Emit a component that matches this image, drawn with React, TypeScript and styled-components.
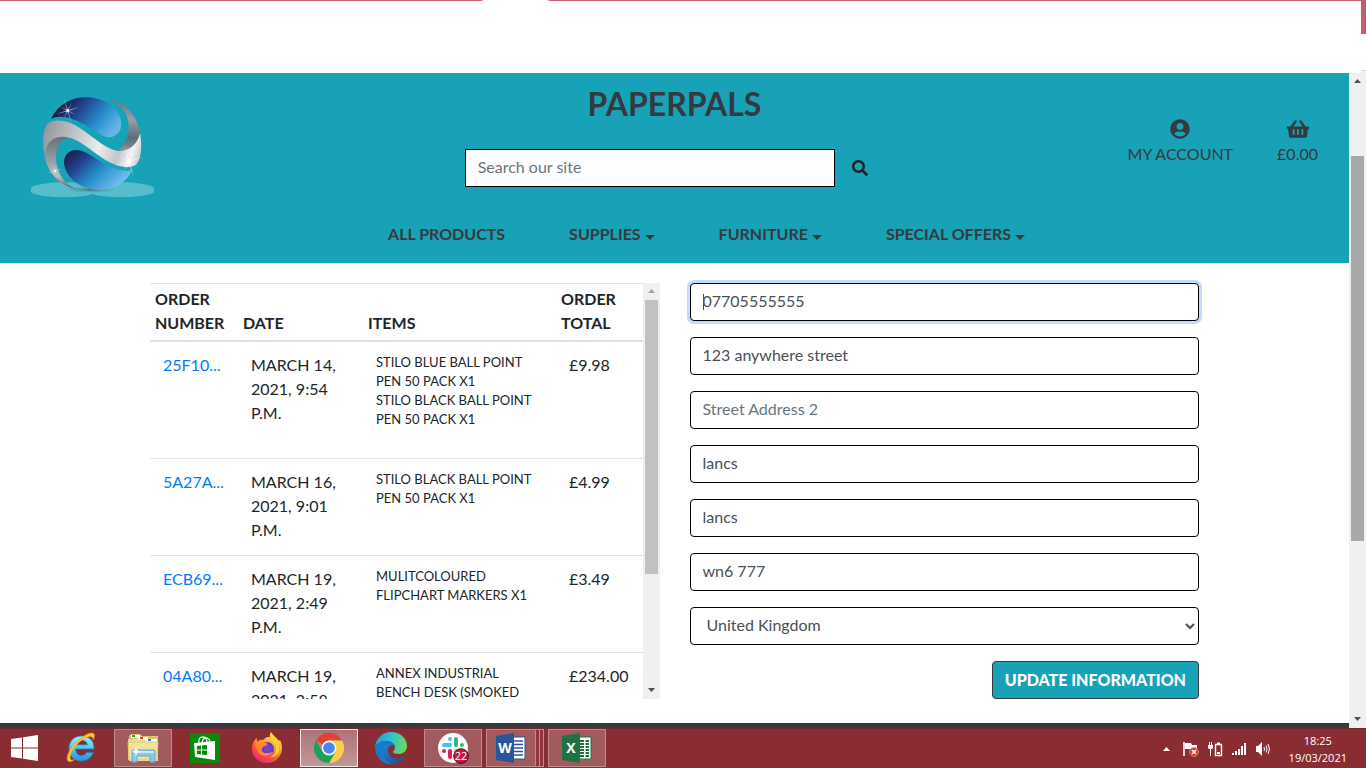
import React from "react";
import styled, { createGlobalStyle, css } from "styled-components";
import { FaSearch, FaShoppingBasket, FaUserCircle } from "react-icons/fa";

const GlobalStyle = createGlobalStyle`
  *, *::before, *::after { box-sizing: border-box; }
  body {
    margin: 0;
    font-family: Lato, "Liberation Sans", sans-serif;
    font-size: 16px;
    line-height: 24px;
    color: #212529;
    background: #fff;
  }
  input, select, button { font: inherit; margin: 0; }
  a { text-decoration: none; }
`;

const Screen = styled.div`
  display: flex;
  flex-direction: column;
  min-height: 100vh;
`;

/* ---------- browser frame ---------- */

const WindowTop = styled.div`
  display: flex;
  height: 73px;
`;

const TabEdge = styled.div`
  flex: 1;
  height: 1px;
  background: linear-gradient(90deg, #c95f6b 481px, #fff 484px 547px, #c95f6b 550px);
`;

const WindowEdge = styled.div`
  width: 5px;
  background: linear-gradient(#c95c68 34px, #fff 34px 70px, #dadada 70px 71px, #f0f0f0 71px);
`;

const Viewport = styled.div`
  display: flex;
  flex: 1;
`;

const Page = styled.div`
  display: flex;
  flex-direction: column;
  flex: 1;
  min-width: 0;
`;

const Track = styled.div`
  display: flex;
  flex-direction: column;
  align-items: center;
  flex: none;
  width: 17px;
  background: #f0f0f0;
`;

const TrackSpace = styled.div<{ $part: number }>`
  flex: ${(p) => p.$part} 1 0;
`;

const Thumb = styled.div<{ $part: number; $color: string }>`
  flex: ${(p) => p.$part} 1 0;
  width: 13px;
  background: ${(p) => p.$color};
`;

const ArrowCell = styled.div<{ $color: string }>`
  display: flex;
  align-items: center;
  justify-content: center;
  height: 17px;
  padding-bottom: 2px;
  color: ${(p) => p.$color};
`;

interface ScrollbarProps {
  before: number;
  thumb: number;
  after: number;
  color: string;
  upColor: string;
}

function Scrollbar({ before, thumb, after, color, upColor }: ScrollbarProps) {
  return (
    <Track aria-hidden="true">
      <ArrowCell $color={upColor}>
        <svg width="7" height="4" viewBox="0 0 7 4"><path d="M0 4L3.5 0L7 4Z" fill="currentColor" /></svg>
      </ArrowCell>
      <TrackSpace $part={before} />
      <Thumb $part={thumb} $color={color} />
      <TrackSpace $part={after} />
      <ArrowCell $color="#505050">
        <svg width="7" height="4" viewBox="0 0 7 4"><path d="M0 0L3.5 4L7 0Z" fill="currentColor" /></svg>
      </ArrowCell>
    </Track>
  );
}

/* ---------- shop header ---------- */

const Header = styled.header`
  background: #17a2b8;
  color: #343a40;
  padding-bottom: 9px;
`;

const HeaderTop = styled.div`
  display: grid;
  grid-template-columns: repeat(3, 1fr);
  height: 141px;
`;

const LogoLink = styled.a`
  display: block;
  padding: 24px 0 0 31px;
  svg { display: block; }
`;

const Middle = styled.div`
  padding: 12px 15px 0;
`;

const Title = styled.h1`
  margin: 0 0 26px;
  font-size: 32px;
  line-height: 38px;
  font-weight: 700;
  text-align: center;
`;

const SearchForm = styled.form`
  display: flex;
`;

const SearchInput = styled.input`
  flex: 1;
  min-width: 0;
  height: 38px;
  padding: 0 12px 3px;
  border: 1px solid #000;
  border-radius: 0;
  background: #fff;
  color: #495057;
  &::placeholder { color: #6c757d; opacity: 1; }
`;

const SearchButton = styled.button`
  display: flex;
  align-items: center;
  justify-content: center;
  width: 49px;
  height: 38px;
  padding: 0;
  border: 0;
  background: transparent;
  color: #212529;
`;

const UserLinks = styled.ul`
  display: flex;
  justify-content: flex-end;
  gap: 44px;
  margin: 0;
  padding: 46px 31px 0 0;
  list-style: none;
`;

const UserLink = styled.a<{ $iconWidth: number }>`
  display: flex;
  flex-direction: column;
  align-items: center;
  gap: 3px;
  color: #343a40;
  svg { display: block; height: 20px; width: ${(p) => p.$iconWidth}px; }
`;

const Nav = styled.nav`
  display: flex;
  justify-content: center;
  gap: 64px;
  padding: 8px 0 8px 64px;
`;

const NavLink = styled.a<{ $menu?: boolean }>`
  display: flex;
  align-items: center;
  color: #343a40;
  font-weight: 700;
  white-space: nowrap;
  ${(p) => p.$menu && css`
    &::after {
      content: "";
      margin: 6px 0 0 4px;
      border: 5px solid transparent;
      border-top-color: currentColor;
      border-bottom: 0;
    }
  `}
`;

/* ---------- profile ---------- */

const Main = styled.main`
  display: grid;
  grid-template-columns: repeat(2, minmax(0, 1fr));
  gap: 30px;
  width: 100%;
  max-width: 1049px;
  margin: 0 auto;
  padding: 20px 0 24px;
`;

const History = styled.section`
  display: flex;
  height: 416px;
`;

const HistoryScroll = styled.div`
  flex: 1;
  min-width: 0;
  overflow: hidden;
`;

const Orders = styled.table`
  width: 100%;
  table-layout: fixed;
  border-spacing: 0;
  text-transform: uppercase;
  tbody tr:first-child td { border-top: 0; }
`;

const Col = styled.col<{ $w: string }>`
  width: ${(p) => p.$w};
`;

const HeadCell = styled.th`
  padding: 3px 5px 5px;
  border-top: 1px solid #dee2e6;
  border-bottom: 2px solid #dee2e6;
  text-align: left;
  vertical-align: bottom;
  font-weight: 700;
`;

const Cell = styled.td`
  padding: 11px 13px 13px;
  border-top: 1px solid #dee2e6;
  vertical-align: top;
`;

const OrderLink = styled.a`
  color: #007bff;
`;

const ItemList = styled.ul`
  margin: 0 0 16px;
  padding: 0;
  list-style: none;
  font-size: 13px;
  line-height: 19px;
`;

const Details = styled.form`
  display: flex;
  flex-direction: column;
  gap: 16px;
`;

const Field = styled.div`
  position: relative;
  display: flex;
`;

const control = css`
  width: 100%;
  height: 38px;
  border: 1px solid #000;
  border-radius: 4px;
  background: #fff;
  color: #495057;
`;

const TextInput = styled.input<{ $active?: boolean }>`
  ${control}
  padding: 0 12px 3px;
  box-shadow: ${(p) => (p.$active ? "0 0 0 3px #bfdeff" : "none")};
  &::placeholder { color: #6c757d; opacity: 1; }
`;

const TextCaret = styled.span`
  position: absolute;
  left: 13px;
  top: 11px;
  width: 1px;
  height: 16px;
  background: #495057;
`;

const Select = styled.select`
  ${control}
  padding: 0 12px 3px;
`;

const UpdateButton = styled.button`
  align-self: flex-end;
  height: 38px;
  padding: 0 12px 1px;
  border: 1px solid #343a40;
  border-radius: 4px;
  background: #17a2b8;
  color: #fff;
  font-weight: 900;
  text-transform: uppercase;
`;

const Footer = styled.footer`
  height: 5px;
  margin-top: auto;
  background: #343a40;
`;

/* ---------- taskbar ---------- */

const Taskbar = styled.div`
  display: flex;
  align-items: stretch;
  height: 40px;
  border-top: 1px solid #74262c;
  background: #892d33;
  color: #fff;
`;

const Apps = styled.div`
  display: flex;
  gap: 4px;
  padding-bottom: 1px;
`;

const AppButton = styled.button<{ $state?: "open" | "active"; $w?: number }>`
  display: flex;
  align-items: center;
  justify-content: center;
  width: ${(p) => p.$w ?? 58}px;
  padding: 0;
  border: 1px solid ${(p) => (p.$state === "active" ? "#f4e9ea" : p.$state ? "#c08b8e" : "transparent")};
  background: ${(p) => (p.$state === "active" ? "linear-gradient(#ab7477, #c19799)" : p.$state ? "#a15a5e" : "transparent")};
  svg { display: block; }
`;

const AppStack = styled.div`
  display: flex;
  width: 58px;
`;

const StackEdge = styled.span`
  width: 4px;
  border: 1px solid #c08b8e;
  border-left: 0;
  background: #8f373c;
`;

const Tray = styled.div`
  display: flex;
  align-items: center;
  gap: 8px;
  margin-left: auto;
  padding-right: 19px;
  svg { display: block; }
  svg:first-child { margin-right: 5px; }
`;

const Clock = styled.time`
  margin-left: 10px;
  font-family: "Open Sans", "Noto Sans", sans-serif;
  font-size: 11px;
  line-height: 17px;
  text-align: center;
`;

/* ---------- drawings ---------- */

function Sparkle({ x, y, r }: { x: number; y: number; r: number }) {
  return (
    <g transform={`translate(${x} ${y}) rotate(-17) scale(${r})`} fill="#fff">
      <path d="M0 -1L.05 -.05L0 1L-.05 -.05Z" opacity=".55" />
      <path d="M-1 0L0 -.05L1 0L0 .05Z" opacity=".55" />
      <path d="M-.5 -.5L.04 -.04L.5 .5L-.04 .04ZM.5 -.5L.04 .04L-.5 .5L-.04 -.04Z" opacity=".4" />
      <circle r=".11" />
    </g>
  );
}

function Logo() {
  return (
    <svg width="123" height="100" viewBox="93 81 369 300" role="img" aria-label="Paperpals home">
      <defs>
        <linearGradient id="blueTop" gradientUnits="userSpaceOnUse" x1="195" y1="95" x2="325" y2="205">
          <stop offset="0" stopColor="#152047" /><stop offset=".27" stopColor="#21418d" />
          <stop offset=".65" stopColor="#258dcb" /><stop offset="1" stopColor="#63b7e8" />
        </linearGradient>
        <linearGradient id="blueLow" gradientUnits="userSpaceOnUse" x1="202" y1="242" x2="325" y2="370">
          <stop offset="0" stopColor="#141c3c" /><stop offset=".3" stopColor="#21418d" />
          <stop offset=".62" stopColor="#258dcb" /><stop offset="1" stopColor="#6dbceb" />
        </linearGradient>
        <linearGradient id="silver" gradientUnits="userSpaceOnUse" x1="130" y1="180" x2="420" y2="270">
          <stop offset="0" stopColor="#92979c" /><stop offset=".25" stopColor="#b7babe" />
          <stop offset=".57" stopColor="#ececef" /><stop offset=".78" stopColor="#c3c6c9" />
          <stop offset=".9" stopColor="#f4f4f5" /><stop offset="1" stopColor="#c4c7ca" />
        </linearGradient>
        <linearGradient id="steelR" x1="0" y1="0" x2="0" y2="1">
          <stop offset="0" stopColor="#65727b" /><stop offset=".4" stopColor="#98a0a5" />
          <stop offset=".75" stopColor="#5d6c76" /><stop offset="1" stopColor="#8a9296" />
        </linearGradient>
        <linearGradient id="steelL" x1="0" y1="0" x2="0" y2="1">
          <stop offset="0" stopColor="#64727b" /><stop offset=".45" stopColor="#969da2" />
          <stop offset=".75" stopColor="#b9bcbf" /><stop offset="1" stopColor="#505f69" />
        </linearGradient>
        <radialGradient id="shade">
          <stop offset="0" stopColor="#4a5d68" stopOpacity=".9" /><stop offset="1" stopColor="#5fa0ab" stopOpacity="0" />
        </radialGradient>
      </defs>
      <path d="M93 353C115 334 245 331 278 348C312 331 440 334 462 353V367C440 385 312 386 278 372C245 386 115 385 93 367Z" fill="#fff" opacity=".28" />
      <ellipse cx="275" cy="359" rx="82" ry="10" fill="url(#shade)" />
      <path d="M133 252C137 208 170 192 207 203C180 208 166 235 168 270C172 312 194 344 230 358C178 348 139 304 133 252Z" fill="url(#steelL)" />
      <path d="M325 86C378 97 413 140 421 190C414 226 388 247 355 241C379 220 390 190 385 155C380 125 360 100 325 86Z" fill="url(#steelR)" />
      <path d="M153 147C175 100 220 80 262 82C325 84 363 125 364 160C364 185 350 201 328 202C300 202 275 170 225 150C195 138 170 138 153 147Z" fill="url(#blueTop)" />
      <path d="M397 300C375 345 335 360 295 360C235 358 192 315 192 275C194 252 210 240 228 240C260 240 280 265 320 285C350 300 375 305 397 300Z" fill="url(#blueLow)" />
      <path d="M134 254C125 210 131 172 145 158C165 148 195 150 225 165C270 190 310 235 350 242C385 247 412 225 420 190C426 220 425 260 412 280C400 294 375 294 350 286C300 270 265 225 215 205C180 194 141 200 134 254Z" fill="url(#silver)" />
      <Sparkle x={203} y={122} r={38} />
      <Sparkle x={387} y={274} r={48} />
      <Sparkle x={165} y={303} r={24} />
    </svg>
  );
}

const StartIcon = () => (
  <svg width="28" height="26" viewBox="0 0 28 26" fill="#fff"><path d="M1 4L12 2.4V12.4H1ZM13 2.2L28 0V12.4H13ZM1 13.4H12V23.6L1 22ZM13 13.4H28V26L13 23.8Z" /></svg>
);

const ExplorerEIcon = () => (
  <svg width="32" height="32" viewBox="1 1 32 32">
    <defs><linearGradient id="ieBlue" x1="0" y1="0" x2="0" y2="1"><stop offset="0" stopColor="#a6e9fd" /><stop offset=".5" stopColor="#50c5f3" /><stop offset="1" stopColor="#2397dc" /></linearGradient></defs>
    <path d="M30 18H11.5C11.8 22 14 24.5 17.5 24.5C20 24.5 21.6 23.4 22.6 21.6H29.2C27.4 27 23 30 17.3 30C9.8 30 5 25 5 17.6C5 10 10 5 17.3 5C25.5 5 30.5 10 30 18ZM11.7 13.8H23.4C23 11 20.7 9.3 17.7 9.3C14.5 9.3 12.2 11 11.7 13.8Z" fill="url(#ieBlue)" stroke="#1b83bd" strokeWidth=".7" />
    <path d="M4 30C1 27 6 16 15 8.5C21 3.5 28 0 30 3C31 4.5 30.3 7 29.3 9C29 6.5 27.5 4.5 23 6.3C13 10.3 4.5 23 6.5 28C7.3 29.6 9.5 29 11 28.3C8 30.8 5.5 31.2 4 30Z" fill="#fbc62b" stroke="#d99b12" strokeWidth=".5" />
  </svg>
);

const FolderIcon = () => (
  <svg width="34" height="30" viewBox="0 0 34 30">
    <path d="M3 3L5 1H14L16 3H32V26H3Z" fill="#d8c375" />
    <path d="M5 2H14V5H5Z" fill="#fff" /><path d="M6 2H9V4H6Z" fill="#1aab38" />
    <path d="M2 6H31V27H2Z" fill="#ead88b" /><path d="M12 4H22V7H12Z" fill="#fff" /><path d="M14 4H17V6H14Z" fill="#dc3b2d" />
    <path d="M3 8H32V28H3Z" fill="#f5e7a4" /><path d="M20 6H31V9H20Z" fill="#fff" /><path d="M22 6H25V8H22Z" fill="#2a83dc" />
    <path d="M2 9H32L31 27H3Z" fill="#f3e19a" stroke="#dcc777" />
    <path d="M6 18Q6 17 7 17H28Q29 17 29 18V29H24V23H11V29H6Z" fill="#8ac8e6" stroke="#5fa9cf" />
    <path d="M7 18H28V20H7Z" fill="#c6eafa" />
    <path d="M10 13L11 17L14 18.500L11 20L10 24L9 20L6 18.500L9 17Z" fill="#fff" />
  </svg>
);

const StoreIcon = () => (
  <svg width="30" height="30" viewBox="0 0 30 30">
    <path d="M0 0H30V30H0Z" fill="#078a08" />
    <path d="M9 10Q8 4 13 4Q17 4 17 10M12 10Q13 4 17 5Q20 6 20 10" fill="none" stroke="#e8f3e8" strokeWidth="1.300" />
    <path d="M4 10L25 8V27L5 24Z" fill="#fff" />
    <path d="M7 13L11 12.600V16.500H7ZM12 12.500L17 12V16.500H12ZM7 17.500H11V21.500L7 21ZM12 17.500H17V22.200L12 21.600Z" fill="#078a08" />
  </svg>
);

const FirefoxIcon = () => (
  <svg width="32" height="32" viewBox="0 0 32 32">
    <defs>
      <linearGradient id="foxFire" x1=".8" y1="0" x2=".25" y2="1"><stop offset="0" stopColor="#fff04a" /><stop offset=".35" stopColor="#ffb02c" /><stop offset=".65" stopColor="#ff5a38" /><stop offset="1" stopColor="#e5207c" /></linearGradient>
      <radialGradient id="foxGlobe"><stop offset="0" stopColor="#7b45d4" /><stop offset="1" stopColor="#5a3cb6" /></radialGradient>
    </defs>
    <path d="M16 31C7 31 1 24.500 1 16.500C1 12 3 8.500 5.500 6L6.500 10C8 8 9 7.500 12 8C14 6 15 4.500 19 5C18.500 3.500 19 2 20 0C22 4 26 5.500 28 9L29 8C31 12 31 15 31 17C30.500 25 24 31 16 31Z" fill="url(#foxFire)" />
    <circle cx="16" cy="17" r="7" fill="url(#foxGlobe)" />
    <path d="M5 10C9 8 14 10 17 12C15 14 13 14 11 16C10 19 12 21 15 21C18 22 19 20 22 20C19 25 12 25 8 21C5 18 4 14 5 10Z" fill="#ff8a28" />
    <path d="M18 7C23 8 26 13 25 19C24 23 21 25 18 25C25 26 29 21 28 15C27 11 23 7 18 7Z" fill="#ffd23d" />
  </svg>
);

const ChromeIcon = () => (
  <svg width="30" height="30" viewBox="0 0 30 30">
    <path d="M15 15L2 7.500A15 15 0 0 1 28 7.500H15Z" fill="#dc4535" />
    <path d="M15 15V7.500H28A15 15 0 0 1 15 30L21.500 18.800Z" fill="#fdce44" />
    <path d="M15 15L21.500 18.800L15 30A15 15 0 0 1 2 7.500L8.500 18.800Z" fill="#1ea05c" />
    <circle cx="15" cy="15" r="7.400" fill="#f5f5f5" /><circle cx="15" cy="15" r="5.800" fill="#4486f4" />
  </svg>
);

const EdgeIcon = () => (
  <svg width="32" height="32" viewBox="0 0 32 32">
    <defs>
      <linearGradient id="edgeTop" x1="0" y1=".3" x2="1" y2=".5"><stop offset="0" stopColor="#239be2" /><stop offset=".5" stopColor="#2fc2cf" /><stop offset="1" stopColor="#68dc55" /></linearGradient>
      <linearGradient id="edgeLow" x1="0" y1="0" x2="1" y2="1"><stop offset="0" stopColor="#2287da" /><stop offset="1" stopColor="#104d8e" /></linearGradient>
    </defs>
    <path d="M0 15C1 6 8 0 16 0C26 0 32 7 32 14C32 19 28 22 24 22C20 22 18 21 18 20C18 19 20 18 20 15C20 12 16 9 11 9C6 9 2 12 0 15Z" fill="url(#edgeTop)" />
    <path d="M0 15C2 11 6 9 11 9C16 9 20 12 20 15C18 12 14 13 13 16C11 21 16 27 22 27C26 27 28 25 30 24C27 29 22 32 16 32C7 32 0 25 0 15Z" fill="#1b78cb" />
    <path d="M13 12C9 14 8 17 8 20C8 26 12 31 18 32C23 31.500 27 29 30 24C27 26 25 27 22 27C16 27 11 21 13 16C13.500 14 15 13 16 13C15 12 14 12 13 12Z" fill="url(#edgeLow)" />
  </svg>
);

const SlackIcon = () => (
  <svg width="32" height="32" viewBox="0 0 32 32">
    <circle cx="16" cy="16" r="15" fill="#fff" />
    <g strokeWidth="4" strokeLinecap="round">
      <path d="M13 7V7.100M7 13H13" stroke="#36c5f0" /><path d="M19 7V13M25 13V13.100" stroke="#2eb67d" />
      <path d="M25 19H19M19 25V25.100" stroke="#ecb22e" /><path d="M13 19V25M7 19V19.100" stroke="#e01e5a" />
    </g>
    <circle cx="24" cy="24" r="7.300" fill="#c9174c" stroke="#3d0f1e" />
    <text x="24" y="28" fill="#fff" fontSize="11" fontFamily="Open Sans, sans-serif" textAnchor="middle">22</text>
  </svg>
);

interface OfficeIconProps {
  letter: string;
  color: string;
  grid?: boolean;
}

const OfficeIcon = ({ letter, color, grid }: OfficeIconProps) => (
  <svg width="30" height="30" viewBox="0 0 30 30">
    <path d="M16 4H29V26H16Z" fill="#fff" stroke={color} />
    {grid
      ? <path d="M18 8H22M23.500 8H27M18 11H22M23.500 11H27M18 14H22M23.500 14H27M18 17H22M23.500 17H27M18 20H22M23.500 20H27M18 23H22M23.500 23H27" stroke={color} strokeWidth="2" />
      : <path d="M18 8H27M18 11.500H27M18 15H27M18 18.500H27M18 22H27" stroke={color} strokeWidth="1.300" />}
    <path d="M0 3L18 0V30L0 27Z" fill={color} />
    <text x="9" y="20" fill="#fff" fontSize="14" fontWeight="700" fontFamily="Open Sans, sans-serif" textAnchor="middle">{letter}</text>
  </svg>
);

const TrayArrow = () => (
  <svg width="7" height="4" viewBox="0 0 7 4"><path d="M0 4L3.500 0L7 4Z" fill="#fff" /></svg>
);

const FlagIcon = () => (
  <svg width="16" height="16" viewBox="0 0 16 16">
    <path d="M1 1V15" stroke="#fff" strokeWidth="1.600" /><path d="M2 2H8L9 4H14V10H8L7 8H2Z" fill="#fff" />
    <circle cx="11" cy="11" r="4.500" fill="#dc3626" stroke="#f4a39b" strokeWidth=".6" />
    <path d="M9 9L13 13M13 9L9 13" stroke="#fff" strokeWidth="1.600" />
  </svg>
);

const BatteryIcon = () => (
  <svg width="16" height="16" viewBox="0 0 16 16">
    <path d="M1 4H6V7L5 8H2L1 7ZM2 1H3V4H2ZM4 1H5V4H4ZM3 8H4V15H3Z" fill="#fff" />
    <path d="M8.500 3.500H14.500V14.500H8.500Z" fill="none" stroke="#fff" strokeWidth="1.400" />
    <path d="M10 1.500H13V3H10ZM10 11H13V13H10Z" fill="#fff" />
  </svg>
);

const SignalIcon = () => (
  <svg width="16" height="16" viewBox="0 0 16 16"><path d="M1 12H3V14H1ZM4 10H6V14H4ZM7 8H9V14H7ZM10 5H12V14H10ZM13 2H15V14H13Z" fill="#fff" /></svg>
);

const VolumeIcon = () => (
  <svg width="16" height="16" viewBox="0 0 16 16">
    <path d="M1 5H3L7 1V15L3 11H1Z" fill="#fff" />
    <path d="M9 6Q10 8 9 10M11 4.500Q13 8 11 11.500M13 3Q16 8 13 13" fill="none" stroke="#fff" />
  </svg>
);

/* ---------- data ---------- */

const orders = [
  { id: "25F10...", date: "March 14, 2021, 9:54 p.m.", items: ["Stilo Blue Ball Point Pen 50 pack x1", "Stilo Black Ball Point Pen 50 pack x1"], total: "£9.98" },
  { id: "5A27A...", date: "March 16, 2021, 9:01 p.m.", items: ["Stilo Black Ball Point Pen 50 pack x1"], total: "£4.99" },
  { id: "ECB69...", date: "March 19, 2021, 2:49 p.m.", items: ["Mulitcoloured Flipchart Markers x1"], total: "£3.49" },
  { id: "04A80...", date: "March 19, 2021, 2:58 p.m.", items: ["Annex Industrial Bench Desk (Smoked"], total: "£234.00" },
];

const fields = [
  { label: "Phone Number", value: "07705555555", active: true },
  { label: "Street Address 1", value: "123 anywhere street" },
  { label: "Street Address 2", value: "" },
  { label: "Town or City", value: "lancs" },
  { label: "County", value: "lancs" },
  { label: "Postal Code", value: "wn6 777" },
];

export default function App() {
  return (
    <Screen>
      <GlobalStyle />
      <WindowTop><TabEdge /><WindowEdge /></WindowTop>
      <Viewport>
        <Page>
          <Header>
            <HeaderTop>
              <LogoLink href="#"><Logo /></LogoLink>
              <Middle>
                <Title>PAPERPALS</Title>
                <SearchForm>
                  <SearchInput type="text" placeholder="Search our site" aria-label="Search our site" />
                  <SearchButton type="button" aria-label="Search"><FaSearch size={16} /></SearchButton>
                </SearchForm>
              </Middle>
              <UserLinks>
                <li><UserLink href="#" $iconWidth={20}><FaUserCircle />MY ACCOUNT</UserLink></li>
                <li><UserLink href="#" $iconWidth={24}><FaShoppingBasket />£0.00</UserLink></li>
              </UserLinks>
            </HeaderTop>
            <Nav>
              <NavLink href="#">ALL PRODUCTS</NavLink>
              <NavLink href="#" $menu>SUPPLIES</NavLink>
              <NavLink href="#" $menu>FURNITURE</NavLink>
              <NavLink href="#" $menu>SPECIAL OFFERS</NavLink>
            </Nav>
          </Header>
          <Main>
            <History>
              <HistoryScroll>
                <Orders>
                  <colgroup><Col $w="88px" /><Col $w="125px" /><Col $w="193px" /><Col $w="auto" /></colgroup>
                  <thead>
                    <tr>
                      <HeadCell>Order Number</HeadCell>
                      <HeadCell>Date</HeadCell>
                      <HeadCell>Items</HeadCell>
                      <HeadCell>Order Total</HeadCell>
                    </tr>
                  </thead>
                  <tbody>
                    {orders.map((o) => (
                      <tr key={o.id}>
                        <Cell><OrderLink href="#">{o.id}</OrderLink></Cell>
                        <Cell>{o.date}</Cell>
                        <Cell><ItemList>{o.items.map((i) => <li key={i}>{i}</li>)}</ItemList></Cell>
                        <Cell>{o.total}</Cell>
                      </tr>
                    ))}
                  </tbody>
                </Orders>
              </HistoryScroll>
              <Scrollbar before={0} thumb={274} after={108} color="#c1c1c1" upColor="#a3a3a3" />
            </History>
            <Details>
              {fields.map((f) => (
                <Field key={f.label}>
                  <TextInput type="text" defaultValue={f.value} placeholder={f.label} aria-label={f.label} $active={f.active} />
                  {f.active && <TextCaret />}
                </Field>
              ))}
              <Field>
                <Select aria-label="Country"><option>United Kingdom</option></Select>
              </Field>
              <UpdateButton type="button">Update Information</UpdateButton>
            </Details>
          </Main>
          <Footer />
        </Page>
        <Scrollbar before={66} thumb={385} after={170} color="#a8a8a8" upColor="#505050" />
      </Viewport>
      <Taskbar>
        <Apps>
          <AppButton $w={48} aria-label="Start"><StartIcon /></AppButton>
          <AppButton aria-label="Internet Explorer"><ExplorerEIcon /></AppButton>
          <AppButton $state="open" aria-label="File Explorer"><FolderIcon /></AppButton>
          <AppButton aria-label="Store"><StoreIcon /></AppButton>
          <AppButton aria-label="Firefox"><FirefoxIcon /></AppButton>
          <AppButton $state="active" aria-label="Chrome"><ChromeIcon /></AppButton>
          <AppButton aria-label="Edge"><EdgeIcon /></AppButton>
          <AppButton $state="open" aria-label="Slack"><SlackIcon /></AppButton>
          <AppStack>
            <AppButton $state="open" $w={51} aria-label="Word"><OfficeIcon letter="W" color="#2a5699" /></AppButton>
            <StackEdge /><StackEdge />
          </AppStack>
          <AppButton $state="open" aria-label="Excel"><OfficeIcon letter="X" color="#207245" grid /></AppButton>
        </Apps>
        <Tray>
          <TrayArrow />
          <FlagIcon />
          <BatteryIcon />
          <SignalIcon />
          <VolumeIcon />
          <Clock>18:25<br />19/03/2021</Clock>
        </Tray>
      </Taskbar>
    </Screen>
  );
}
